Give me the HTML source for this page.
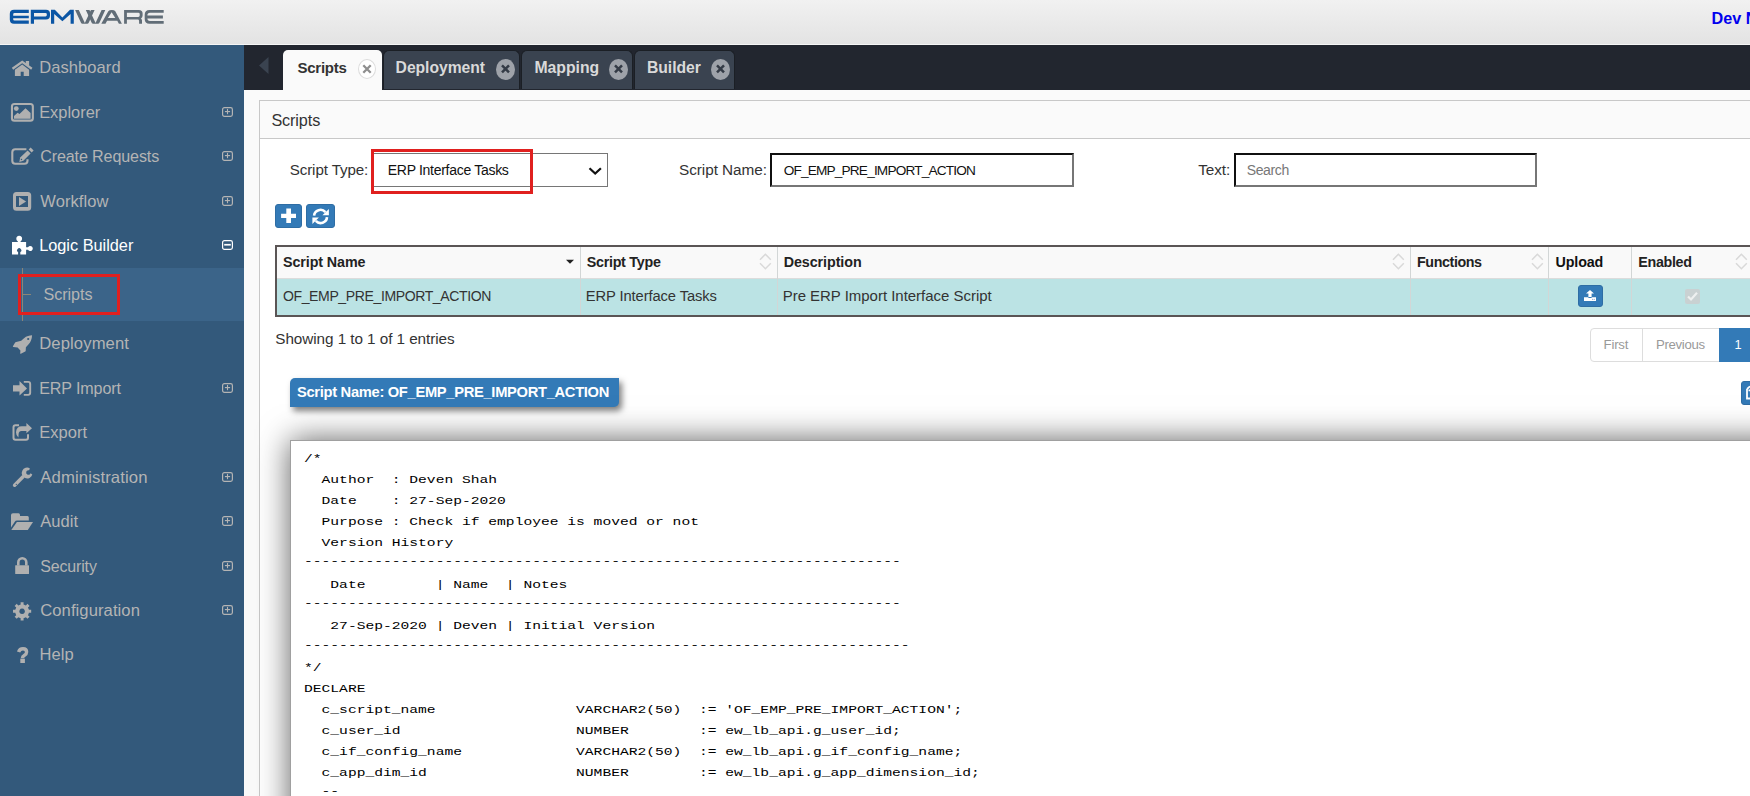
<!DOCTYPE html>
<html><head><meta charset="utf-8"><style>
*{box-sizing:border-box}
html,body{margin:0;padding:0}
body{width:1750px;height:796px;overflow:hidden;position:relative;background:#f5f5f5;font-family:"Liberation Sans",sans-serif;color:#333}
.abs{position:absolute}
.t{position:absolute;white-space:pre;line-height:1}
svg{position:absolute;overflow:visible}
</style></head><body>
<div class="abs" style="left:0;top:0;width:1750px;height:44px;background:linear-gradient(#f1f1f1,#e3e3e3)"></div>
<div class="abs" style="left:0;top:44px;width:1750px;height:1px;background:#f6f6f6"></div>
<svg style="left:0;top:0" width="180" height="44" viewBox="0 0 180 44">
<g fill="#0b56a5" fill-rule="evenodd">
<path d="M28.8,9.8 H14 Q9.8,9.8 9.8,14 V19.6 Q9.8,23.8 14,23.8 H28.8 V20.5 H14.5 Q13.2,20.5 13.2,19.2 V18.3 H28.8 V15.7 H13.2 V14.4 Q13.2,13 14.5,13 H28.8 Z"/>
<path d="M30.8,23.8 V9.8 H46 Q50,9.8 50,13.8 V15.6 Q50,19.6 46,19.6 H34 V23.8 Z M34,13 V16.4 H45.5 Q46.8,16.4 46.8,15.1 V14.3 Q46.8,13 45.5,13 Z"/>
<path d="M51,23.8 V9.8 H54.8 L62.4,17.4 L70,9.8 H73.8 V23.8 H70.6 V14 L62.4,21.2 L54.2,14 V23.8 Z"/>
</g>
<g fill="#616d77" fill-rule="evenodd">
<path d="M75.1,10.1 H78.8 L84.85,22.9 L90.9,10.1 H94.6 L88.6,23 Q88.2,23.7 87.3,23.7 H82.4 Q81.5,23.7 81.1,23 Z"/>
<path transform="translate(10.7,0)" d="M75.1,10.1 H78.8 L84.85,22.9 L90.9,10.1 H94.6 L88.6,23 Q88.2,23.7 87.3,23.7 H82.4 Q81.5,23.7 81.1,23 Z"/>
<path d="M101.3,23.7 L108.3,11.2 Q109.2,10 111.8,10 Q114.4,10 115.3,11.2 L121.9,23.7 H118.9 L117.3,20.7 H107.1 L105.5,23.7 Z M111.6,12.3 L115.3,18.1 H107.9 Z"/>
<path d="M124.1,23.7 V10 H138.8 Q142.6,10 142.6,13.6 V15.5 Q142.6,17.6 141,18.6 Q142,19.4 142,20.6 V23.7 H139.1 V21 Q139.1,19.6 137.7,19.6 H126.9 V23.7 Z M126.9,12.7 V16.9 H138.3 Q139.7,16.9 139.7,15.5 V14.1 Q139.7,12.7 138.3,12.7 Z"/>
<path d="M163.7,10 H149.5 Q144.7,10 144.7,14.8 V18.9 Q144.7,23.7 149.5,23.7 H163.7 V21 H150 Q147.4,21 147.4,18.6 V18.4 H162.9 V15.6 H147.4 V15.2 Q147.4,12.7 150,12.7 H163.7 Z"/>
</g></svg>
<div class="t" style="left:1711.60px;top:10.009px;font-size:16.2px;color:#0000ee;font-weight:bold;">Dev N</div>
<div class="abs" style="left:0;top:45px;width:244px;height:751px;background:#33597b"></div>
<div class="abs" style="left:0;top:268px;width:244px;height:53px;background:#3b6489"></div>
<div class="abs" style="left:22px;top:268px;width:1px;height:53px;background:#8b8576"></div>
<div class="abs" style="left:22px;top:294px;width:9px;height:1px;background:#8b8576"></div>
<div class="t" style="left:39.29px;top:60.011px;font-size:16.54px;color:#b4b4b4;font-weight:normal;letter-spacing:0.057px;">Dashboard</div>
<svg style="left:8px;top:56.0px" width="30" height="24" viewBox="0 0 30 24"><path d="M4.5,12.7 L14.2,5.9 L23.8,12.7" fill="none" stroke="#b0b0b0" stroke-width="2.3"/><rect x="17.8" y="5" width="3.3" height="4.5" fill="#b0b0b0"/><path d="M6.9,13.8 L14.2,8.4 L21.1,13.8 V20 H15.7 V15.7 H12.7 V20 H6.9 Z" fill="#b0b0b0"/></svg>
<div class="t" style="left:39.20px;top:104.003px;font-size:16.4px;color:#b4b4b4;font-weight:normal;">Explorer</div>
<svg style="left:8px;top:100.0px" width="30" height="24" viewBox="0 0 30 24"><rect x="3.95" y="4.05" width="20.9" height="16.6" rx="2.5" fill="none" stroke="#b0b0b0" stroke-width="2.1"/><circle cx="8.3" cy="8.6" r="2.4" fill="#b0b0b0"/><path d="M6,16 L9.6,12.7 L11.5,13.9 L17.5,8.3 L22.6,13 V18.7 H6 Z" fill="#b0b0b0"/></svg>
<svg style="left:222px;top:107px" width="11" height="10" viewBox="0 0 11 10"><rect x="0.6" y="0.6" width="9.8" height="8.8" rx="1.8" fill="none" stroke="#b4b4b4" stroke-width="1.2"/><rect x="2.9" y="4" width="5.2" height="1.15" fill="#b4b4b4"/><rect x="4.95" y="1.9" width="1.1" height="5.3" fill="#b4b4b4"/></svg>
<div class="t" style="left:40.20px;top:148.007px;font-size:16.08px;color:#b4b4b4;font-weight:normal;letter-spacing:-0.114px;">Create Requests</div>
<svg style="left:8px;top:144.0px" width="30" height="24" viewBox="0 0 30 24"><path d="M18.4,5.2 H7.3 Q4.3,5.2 4.3,8.2 V16.8 Q4.3,19.8 7.3,19.8 H16.5 Q19.5,19.8 19.5,16.8 V15.2" fill="none" stroke="#b0b0b0" stroke-width="2.1"/><path d="M11.3,17.9 L12.2,13.6 L19.6,6.5 L22.6,9.6 L15.4,16.8 Z" fill="#b0b0b0"/><path d="M20.6,5.5 L22.6,3.6 L25.6,6.6 L23.6,8.6 Z" fill="#b0b0b0"/><rect x="12.8" y="14.8" width="1.3" height="1.3" fill="#33597b"/></svg>
<svg style="left:222px;top:151px" width="11" height="10" viewBox="0 0 11 10"><rect x="0.6" y="0.6" width="9.8" height="8.8" rx="1.8" fill="none" stroke="#b4b4b4" stroke-width="1.2"/><rect x="2.9" y="4" width="5.2" height="1.15" fill="#b4b4b4"/><rect x="4.95" y="1.9" width="1.1" height="5.3" fill="#b4b4b4"/></svg>
<div class="t" style="left:40.30px;top:194.011px;font-size:16.54px;color:#b4b4b4;font-weight:normal;letter-spacing:0.053px;">Workflow</div>
<svg style="left:8px;top:189.0px" width="30" height="24" viewBox="0 0 30 24"><path fill-rule="evenodd" d="M8.5,3 H19.7 Q23.2,3 23.2,6.5 V18.2 Q23.2,21.7 19.7,21.7 H8.5 Q5,21.7 5,18.2 V6.5 Q5,3 8.5,3 Z M8,6.9 V17.9 H20 V6.9 Z" fill="#b0b0b0"/><path d="M11,8 V16.9 L18.1,12.4 Z" fill="#b0b0b0"/></svg>
<svg style="left:222px;top:196px" width="11" height="10" viewBox="0 0 11 10"><rect x="0.6" y="0.6" width="9.8" height="8.8" rx="1.8" fill="none" stroke="#b4b4b4" stroke-width="1.2"/><rect x="2.9" y="4" width="5.2" height="1.15" fill="#b4b4b4"/><rect x="4.95" y="1.9" width="1.1" height="5.3" fill="#b4b4b4"/></svg>
<div class="t" style="left:39.20px;top:237.214px;font-size:16.34px;color:#ffffff;font-weight:normal;letter-spacing:-0.021px;">Logic Builder</div>
<svg style="left:8px;top:233.0px" width="30" height="24" viewBox="0 0 30 24"><path fill-rule="evenodd" d="M4,8.9 H9.8 V8.2 A2.9,2.9 0 1 1 12.6,8.2 V8.9 H18.1 V14.3 H20 A2.55,2.55 0 1 1 20,16.7 H18.1 V21.4 H12.3 V19.1 A2.1,2.1 0 1 0 10.1,19.1 V21.4 H4 Z" fill="#fff"/></svg>
<svg style="left:222px;top:240px" width="11" height="10" viewBox="0 0 11 10"><rect x="0.6" y="0.6" width="9.8" height="8.8" rx="1.8" fill="none" stroke="#ffffff" stroke-width="1.2"/><rect x="2.2" y="3.9" width="6.6" height="1.7" fill="#ffffff"/></svg>
<div class="t" style="left:39.18px;top:336.211px;font-size:16.66px;color:#b4b4b4;font-weight:normal;letter-spacing:0.102px;">Deployment</div>
<svg style="left:8px;top:331.0px" width="30" height="24" viewBox="0 0 30 24"><path fill-rule="evenodd" d="M24.1,4.2 C21.5,4.2 18.5,5 16,7.2 L13.2,9.8 L8.2,10.9 Q7.4,11.1 7,11.7 L4.9,15.2 Q4.7,15.9 5.4,16 L9.6,16.5 L12.4,19.4 L12.2,22.3 Q12.2,23 12.9,22.8 L17.2,20.6 Q17.7,20.3 17.7,19.8 L17.9,16.2 L20.4,13.6 C22.6,11.3 23.9,8 24.1,4.2 Z M19.1,8 a1.1,1.1 0 1 0 2.2,0 a1.1,1.1 0 1 0 -2.2,0 Z" fill="#b0b0b0"/></svg>
<div class="t" style="left:39.22px;top:380.002px;font-size:16.09px;color:#b4b4b4;font-weight:normal;letter-spacing:-0.118px;">ERP Import</div>
<svg style="left:8px;top:376.0px" width="30" height="24" viewBox="0 0 30 24"><path d="M5,9.3 H11.5 V5 L19,12.4 L11.5,19.6 V15.6 H5 Z" fill="#b0b0b0"/><path d="M15.8,5.9 H20.2 Q22.2,5.9 22.2,7.9 V16.85 Q22.2,18.85 20.2,18.85 H15.8" fill="none" stroke="#b0b0b0" stroke-width="1.9"/></svg>
<svg style="left:222px;top:383px" width="11" height="10" viewBox="0 0 11 10"><rect x="0.6" y="0.6" width="9.8" height="8.8" rx="1.8" fill="none" stroke="#b4b4b4" stroke-width="1.2"/><rect x="2.9" y="4" width="5.2" height="1.15" fill="#b4b4b4"/><rect x="4.95" y="1.9" width="1.1" height="5.3" fill="#b4b4b4"/></svg>
<div class="t" style="left:39.19px;top:424.000px;font-size:16.5px;color:#b4b4b4;font-weight:normal;letter-spacing:0.039px;">Export</div>
<svg style="left:8px;top:420.0px" width="30" height="24" viewBox="0 0 30 24"><path d="M11,5.2 H7.5 Q5.5,5.2 5.5,7.2 V17.8 Q5.5,19.8 7.5,19.8 H18 Q20,19.8 20,17.8 V14.2" fill="none" stroke="#b0b0b0" stroke-width="2"/><path d="M18.4,3 L24,8.2 L18.4,13.3 V10.9 H13.5 Q10.8,11 10.6,14 L10.4,17.6 Q7.8,14.5 8,12.2 Q8.4,6.3 14,6.3 H18.4 Z" fill="#b0b0b0"/></svg>
<div class="t" style="left:40.30px;top:469.803px;font-size:16.72px;color:#b4b4b4;font-weight:normal;letter-spacing:0.103px;">Administration</div>
<svg style="left:8px;top:465.0px" width="30" height="24" viewBox="0 0 30 24"><line x1="6.6" y1="20.2" x2="15" y2="11.8" stroke="#b0b0b0" stroke-width="3.5" stroke-linecap="round"/><circle cx="8.3" cy="19.4" r="0.6" fill="#33597b"/><path d="M21.9,3.4 A5.4,5.4 0 1 0 24.3,9.6 L22.6,8.3 A2.3,2.3 0 1 1 21.1,5.3 Z" fill="#b0b0b0"/></svg>
<svg style="left:222px;top:472px" width="11" height="10" viewBox="0 0 11 10"><rect x="0.6" y="0.6" width="9.8" height="8.8" rx="1.8" fill="none" stroke="#b4b4b4" stroke-width="1.2"/><rect x="2.9" y="4" width="5.2" height="1.15" fill="#b4b4b4"/><rect x="4.95" y="1.9" width="1.1" height="5.3" fill="#b4b4b4"/></svg>
<div class="t" style="left:40.20px;top:514.001px;font-size:16.53px;color:#b4b4b4;font-weight:normal;letter-spacing:0.049px;">Audit</div>
<svg style="left:8px;top:509.0px" width="30" height="24" viewBox="0 0 30 24"><path d="M3,20 V6 Q3,4.2 5,4.2 H10.5 Q12,4.2 12,6 V7 H19.5 Q20.8,7 20.8,8.5 V11.6 H9 Q7.6,11.6 6.8,12.8 L3,18.6 Z" fill="#b0b0b0"/><path d="M8.9,13 H25 L19.8,21 H3.3 Z" fill="#b0b0b0"/></svg>
<svg style="left:222px;top:516px" width="11" height="10" viewBox="0 0 11 10"><rect x="0.6" y="0.6" width="9.8" height="8.8" rx="1.8" fill="none" stroke="#b4b4b4" stroke-width="1.2"/><rect x="2.9" y="4" width="5.2" height="1.15" fill="#b4b4b4"/><rect x="4.95" y="1.9" width="1.1" height="5.3" fill="#b4b4b4"/></svg>
<div class="t" style="left:40.20px;top:558.707px;font-size:15.98px;color:#b4b4b4;font-weight:normal;letter-spacing:-0.139px;">Security</div>
<svg style="left:8px;top:554.0px" width="30" height="24" viewBox="0 0 30 24"><rect x="7.2" y="11.2" width="13.8" height="8.8" rx="0.5" fill="#b0b0b0"/><path d="M10.3,11.5 V8.2 A4,4 0 0 1 18.3,8.2 V11.5" fill="none" stroke="#b0b0b0" stroke-width="2.6"/></svg>
<svg style="left:222px;top:561px" width="11" height="10" viewBox="0 0 11 10"><rect x="0.6" y="0.6" width="9.8" height="8.8" rx="1.8" fill="none" stroke="#b4b4b4" stroke-width="1.2"/><rect x="2.9" y="4" width="5.2" height="1.15" fill="#b4b4b4"/><rect x="4.95" y="1.9" width="1.1" height="5.3" fill="#b4b4b4"/></svg>
<div class="t" style="left:40.20px;top:602.806px;font-size:16.62px;color:#b4b4b4;font-weight:normal;letter-spacing:0.076px;">Configuration</div>
<svg style="left:8px;top:598.0px" width="30" height="24" viewBox="0 0 30 24"><path fill-rule="evenodd" d="M12.67,6.45 L12.59,4.22 L15.61,4.22 L15.53,6.45 L17.93,7.44 L19.45,5.81 L21.59,7.95 L19.96,9.47 L20.95,11.87 L23.18,11.79 L23.18,14.81 L20.95,14.73 L19.96,17.13 L21.59,18.65 L19.45,20.79 L17.93,19.16 L15.53,20.15 L15.61,22.38 L12.59,22.38 L12.67,20.15 L10.27,19.16 L8.75,20.79 L6.61,18.65 L8.24,17.13 L7.25,14.73 L5.02,14.81 L5.02,11.79 L7.25,11.87 L8.24,9.47 L6.61,7.95 L8.75,5.81 L10.27,7.44 Z M14.1,10.5 a2.8,2.8 0 1 0 0.01,0 Z" fill="#b0b0b0"/></svg>
<svg style="left:222px;top:605px" width="11" height="10" viewBox="0 0 11 10"><rect x="0.6" y="0.6" width="9.8" height="8.8" rx="1.8" fill="none" stroke="#b4b4b4" stroke-width="1.2"/><rect x="2.9" y="4" width="5.2" height="1.15" fill="#b4b4b4"/><rect x="4.95" y="1.9" width="1.1" height="5.3" fill="#b4b4b4"/></svg>
<div class="t" style="left:39.39px;top:647.309px;font-size:16.55px;color:#b4b4b4;font-weight:normal;letter-spacing:0.069px;">Help</div>
<svg style="left:8px;top:643.0px" width="30" height="24" viewBox="0 0 30 24"><path d="M10.6,9 Q11.6,5.8 15,5.8 Q18.6,5.8 18.6,9 Q18.6,11 16.5,12.2 Q14.4,13.4 14.4,15.2" fill="none" stroke="#b0b0b0" stroke-width="3.4"/><rect x="12.3" y="15.7" width="4.6" height="4.3" fill="#b0b0b0"/></svg>
<div class="t" style="left:43.60px;top:286.014px;font-size:16.16px;color:#b4b4b4;font-weight:normal;letter-spacing:-0.078px;">Scripts</div>
<div class="abs" style="left:17.5px;top:273.5px;width:102.5px;height:41.5px;border:3px solid #e0201f"></div>
<div class="abs" style="left:244px;top:45px;width:1506px;height:45px;background:#22262f"></div>
<svg style="left:244px;top:45px" width="40" height="45" viewBox="0 0 40 45"><path d="M15,20.5 L24.5,12 V29 Z" fill="#3a4350"/></svg>
<div class="abs" style="left:283px;top:50px;width:99px;height:40px;background:#fafafa;border-radius:5px 5px 0 0"></div>
<div class="t" style="left:297.50px;top:60.011px;font-size:15.04px;color:#333333;font-weight:bold;letter-spacing:-0.280px;">Scripts</div>
<div class="abs" style="left:357.5px;top:59px;width:18px;height:20px;border-radius:50%;background:#fff;border:1px solid #dcdcdc"></div>
<svg style="left:357.5px;top:59px" width="18" height="20" viewBox="0 0 18 20"><path d="M5.3,6.3 L12.7,13.7 M12.7,6.3 L5.3,13.7" stroke="#8e8e8e" stroke-width="2.3"/></svg>
<div class="abs" style="left:383px;top:50px;width:137px;height:39px;background:#3a4350;border:1px solid #1b1f25;border-bottom:none;border-radius:6px 6px 0 0"></div>
<div class="t" style="left:395.61px;top:60.009px;font-size:15.7px;color:#d9d9d9;font-weight:bold;letter-spacing:-0.042px;">Deployment</div>
<div class="abs" style="left:496.0px;top:59px;width:19px;height:21px;border-radius:50%;background:#9ea2a9"></div>
<svg style="left:496.0px;top:59px" width="19" height="21" viewBox="0 0 19 21"><path d="M6,6.4 L13,13.4 M13,6.4 L6,13.4" stroke="#343b46" stroke-width="2.5"/></svg>
<div class="abs" style="left:521px;top:50px;width:112px;height:39px;background:#3a4350;border:1px solid #1b1f25;border-bottom:none;border-radius:6px 6px 0 0"></div>
<div class="t" style="left:534.40px;top:60.006px;font-size:15.77px;color:#d9d9d9;font-weight:bold;letter-spacing:-0.010px;">Mapping</div>
<div class="abs" style="left:608.5px;top:59px;width:19px;height:21px;border-radius:50%;background:#9ea2a9"></div>
<svg style="left:608.5px;top:59px" width="19" height="21" viewBox="0 0 19 21"><path d="M6,6.4 L13,13.4 M13,6.4 L6,13.4" stroke="#343b46" stroke-width="2.5"/></svg>
<div class="abs" style="left:634px;top:50px;width:101px;height:39px;background:#3a4350;border:1px solid #1b1f25;border-bottom:none;border-radius:6px 6px 0 0"></div>
<div class="t" style="left:646.91px;top:60.015px;font-size:15.72px;color:#d9d9d9;font-weight:bold;letter-spacing:-0.033px;">Builder</div>
<div class="abs" style="left:710.5px;top:59px;width:19px;height:21px;border-radius:50%;background:#9ea2a9"></div>
<svg style="left:710.5px;top:59px" width="19" height="21" viewBox="0 0 19 21"><path d="M6,6.4 L13,13.4 M13,6.4 L6,13.4" stroke="#343b46" stroke-width="2.5"/></svg>
<div class="abs" style="left:244px;top:90px;width:1506px;height:706px;background:#fafafa"></div>
<div class="abs" style="left:259px;top:100px;width:1600px;height:800px;background:#fff;border:1px solid #c8c8c8"></div>
<div class="abs" style="left:260px;top:101px;width:1600px;height:38px;background:#fafafa;border-bottom:1px solid #c8c8c8"></div>
<div class="t" style="left:271.40px;top:112.014px;font-size:16.19px;color:#333;font-weight:normal;letter-spacing:-0.106px;">Scripts</div>
<div class="t" style="left:289.70px;top:162.009px;font-size:15.17px;color:#333;font-weight:normal;letter-spacing:-0.101px;">Script Type:</div>
<div class="abs" style="left:373px;top:153px;width:235px;height:34px;background:#fff;border:1px solid #767676"></div>
<div class="t" style="left:387.76px;top:163.011px;font-size:14.04px;color:#111;font-weight:normal;letter-spacing:-0.305px;">ERP Interface Tasks</div>
<svg style="left:585px;top:162.6px" width="20" height="16" viewBox="0 0 20 16"><path d="M4.5,5.2 L10.2,10.6 L15.9,5.2" fill="none" stroke="#111" stroke-width="2.2"/></svg>
<div class="abs" style="left:370.8px;top:148.6px;width:162.5px;height:45.2px;border:3px solid #e0201f"></div>
<div class="t" style="left:679.00px;top:162.007px;font-size:15.33px;color:#333;font-weight:normal;letter-spacing:-0.055px;">Script Name:</div>
<div class="abs" style="left:770px;top:153px;width:304px;height:34px;background:#fff;border:2px solid;border-color:#101010 #767676 #767676 #101010"></div>
<div class="t" style="left:783.70px;top:164.003px;font-size:13.65px;color:#111;font-weight:normal;letter-spacing:-0.827px;">OF_EMP_PRE_IMPORT_ACTION</div>
<div class="t" style="left:1198.20px;top:162.214px;font-size:15.31px;color:#333;font-weight:normal;letter-spacing:-0.060px;">Text:</div>
<div class="abs" style="left:1234px;top:153px;width:303px;height:34px;background:#fff;border:2px solid;border-color:#101010 #767676 #767676 #101010"></div>
<div class="t" style="left:1246.70px;top:163.203px;font-size:14.05px;color:#777;font-weight:normal;letter-spacing:-0.379px;">Search</div>
<div class="abs" style="left:275px;top:204px;width:27px;height:24px;background:#337ab7;border:1px solid #2e6da4;border-radius:3px"></div>
<svg style="left:275px;top:204px" width="27" height="24" viewBox="0 0 27 24"><path d="M6.1,9.8 H21 V13.9 H6.1 Z M11.3,4.4 H16 V18.9 H11.3 Z" fill="#fff"/></svg>
<div class="abs" style="left:306px;top:204px;width:29px;height:24px;background:#337ab7;border:1px solid #2e6da4;border-radius:3px"></div>
<svg style="left:306px;top:204px" width="29" height="24" viewBox="0 0 29 24"><path d="M8.1,11.6 A6.4,6.2 0 0 1 19.4,8.1" fill="none" stroke="#fff" stroke-width="2.6"/><path d="M22.9,5 V11.2 H16.4 Z" fill="#fff"/><path d="M21,13.2 A6.4,6.2 0 0 1 9.8,16.9" fill="none" stroke="#fff" stroke-width="2.6"/><path d="M6.4,19.9 V13.6 H12.9 Z" fill="#fff"/></svg>
<div class="abs" style="left:275px;top:245px;width:1500px;height:72px;background:#bbe3e4;border:2px solid #5a5555;border-right:none"></div>
<div class="abs" style="left:277px;top:247px;width:1500px;height:32px;background:#f9f9f9;border-bottom:1px solid #dcdcdc"></div>
<div class="abs" style="left:580px;top:247px;width:1px;height:68px;background:#d2d6d6"></div>
<div class="abs" style="left:777px;top:247px;width:1px;height:68px;background:#d2d6d6"></div>
<div class="abs" style="left:1410px;top:247px;width:1px;height:68px;background:#d2d6d6"></div>
<div class="abs" style="left:1548px;top:247px;width:1px;height:68px;background:#d2d6d6"></div>
<div class="abs" style="left:1631px;top:247px;width:1px;height:68px;background:#d2d6d6"></div>
<div class="t" style="left:283.00px;top:255.006px;font-size:14.3px;color:#222;font-weight:bold;letter-spacing:-0.098px;">Script Name</div>
<div class="t" style="left:586.70px;top:255.006px;font-size:14.3px;color:#222;font-weight:bold;letter-spacing:-0.265px;">Script Type</div>
<div class="t" style="left:783.70px;top:255.006px;font-size:14.3px;color:#222;font-weight:bold;letter-spacing:-0.071px;">Description</div>
<div class="t" style="left:1417.00px;top:255.006px;font-size:14.3px;color:#222;font-weight:bold;letter-spacing:-0.406px;">Functions</div>
<div class="t" style="left:1555.50px;top:255.006px;font-size:14.3px;color:#111;font-weight:bold;letter-spacing:-0.123px;">Upload</div>
<div class="t" style="left:1638.30px;top:255.006px;font-size:14.3px;color:#222;font-weight:bold;letter-spacing:-0.329px;">Enabled</div>
<div class="t" style="left:283.00px;top:289.006px;font-size:14.05px;color:#333;font-weight:normal;letter-spacing:-0.399px;">OF_EMP_PRE_IMPORT_ACTION</div>
<div class="t" style="left:585.72px;top:289.015px;font-size:14.72px;color:#333;font-weight:normal;letter-spacing:-0.088px;">ERP Interface Tasks</div>
<div class="t" style="left:782.70px;top:289.015px;font-size:14.97px;color:#333;font-weight:normal;letter-spacing:-0.013px;">Pre ERP Import Interface Script</div>
<svg style="left:560px;top:255px" width="20" height="14" viewBox="0 0 20 14"><path d="M6,4.7 H14 L10,8.7 Z" fill="#222"/></svg>
<svg style="left:759px;top:252px" width="13" height="19" viewBox="0 0 13 19"><path d="M1.0,7.7 L6.4,2.2 L11.8,7.7 M1.0,11.3 L6.4,16.7 L11.8,11.3" fill="none" stroke="#d9d9d9" stroke-width="1.5"/></svg>
<svg style="left:1392px;top:252px" width="13" height="19" viewBox="0 0 13 19"><path d="M1.0,7.7 L6.4,2.2 L11.8,7.7 M1.0,11.3 L6.4,16.7 L11.8,11.3" fill="none" stroke="#d9d9d9" stroke-width="1.5"/></svg>
<svg style="left:1530.6px;top:252px" width="13" height="19" viewBox="0 0 13 19"><path d="M1.0,7.7 L6.4,2.2 L11.8,7.7 M1.0,11.3 L6.4,16.7 L11.8,11.3" fill="none" stroke="#d9d9d9" stroke-width="1.5"/></svg>
<svg style="left:1734.6px;top:252px" width="13" height="19" viewBox="0 0 13 19"><path d="M1.0,7.7 L6.4,2.2 L11.8,7.7 M1.0,11.3 L6.4,16.7 L11.8,11.3" fill="none" stroke="#d9d9d9" stroke-width="1.5"/></svg>
<div class="abs" style="left:1578px;top:285px;width:25px;height:22px;background:#337ab7;border:1px solid #2e6da4;border-radius:3px"></div>
<svg style="left:1578px;top:285px" width="25" height="22" viewBox="0 0 25 22"><path d="M8,8.6 L12,5 L16,8.6 H13.6 V12 H10.4 V8.6 Z" fill="#fff"/><path d="M6,12.2 H10.4 V13 H13.6 V12.2 H18 V16 H6 Z" fill="#fff"/><circle cx="14.6" cy="14.3" r="0.55" fill="#6f8fc8"/><circle cx="16.2" cy="14.3" r="0.55" fill="#6f8fc8"/></svg>
<div class="abs" style="left:1685px;top:289px;width:14.5px;height:14.5px;background:#c9d1d2;border-radius:2px"></div>
<svg style="left:1685px;top:289px" width="15" height="15" viewBox="0 0 15 15"><path d="M3,7.5 L6,10.5 L12,3.8" fill="none" stroke="#eef0f0" stroke-width="2.2"/></svg>
<div class="t" style="left:275.30px;top:331.011px;font-size:15.29px;color:#333;font-weight:normal;letter-spacing:-0.061px;">Showing 1 to 1 of 1 entries</div>
<div class="abs" style="left:1590px;top:328px;width:200px;height:34px;background:#fff;border:1px solid #dddddd;border-radius:4px"></div>
<div class="abs" style="left:1642px;top:329px;width:1px;height:32px;background:#dddddd"></div>
<div class="abs" style="left:1719px;top:328px;width:40px;height:34px;background:#337ab7"></div>
<div class="t" style="left:1603.60px;top:338.009px;font-size:13.2px;color:#999;font-weight:normal;letter-spacing:-0.218px;">First</div>
<div class="t" style="left:1656.00px;top:338.009px;font-size:13.2px;color:#999;font-weight:normal;letter-spacing:-0.316px;">Previous</div>
<div class="t" style="left:1734.60px;top:339.006px;font-size:12.8px;color:#fff;font-weight:normal;">1</div>
<div class="abs" style="left:1741px;top:381px;width:30px;height:24px;background:#337ab7;border:1px solid #2e6da4;border-radius:3px"></div>
<svg style="left:1741px;top:381px" width="9" height="24" viewBox="0 0 9 24"><path d="M6,8 V17.5 H10 M6,8 L9,5.3 M7.5,9.3 H10" fill="none" stroke="#fff" stroke-width="1.8"/></svg>
<div class="abs" style="left:290px;top:378px;width:329px;height:29px;background:#337ab7;border-radius:5px 0 5px 0;box-shadow:3px 4px 6px rgba(0,0,0,0.5)"></div>
<div class="t" style="left:297.00px;top:385.004px;font-size:14.71px;color:#fff;font-weight:bold;letter-spacing:-0.311px;">Script Name: OF_EMP_PRE_IMPORT_ACTION</div>
<div class="abs" style="left:290px;top:440px;width:1600px;height:600px;background:#fff;border:1px solid #a0a0a0;box-shadow:0 0 30px rgba(0,0,0,0.62)"></div>
<pre class="abs" style="margin:0;left:304px;top:448.5px;font-family:'Liberation Mono',monospace;font-size:14.63px;line-height:26.795px;color:#000;transform:scaleY(0.78);transform-origin:0 0">/*
  Author  : Deven Shah
  Date    : 27-Sep-2020
  Purpose : Check if employee is moved or not
  Version History
<span style="position:relative;top:-3.4px">--------------------------------------------------------------------</span>
   Date        | Name  | Notes
<span style="position:relative;top:-3.4px">--------------------------------------------------------------------</span>
   27-Sep-2020 | Deven | Initial Version
<span style="position:relative;top:-3.4px">---------------------------------------------------------------------</span>
*/
DECLARE
  c_script_name                VARCHAR2(50)  := &#x27;OF_EMP_PRE_IMPORT_ACTION&#x27;;
  c_user_id                    NUMBER        := ew_lb_api.g_user_id;
  c_if_config_name             VARCHAR2(50)  := ew_lb_api.g_if_config_name;
  c_app_dim_id                 NUMBER        := ew_lb_api.g_app_dimension_id;
<span style="position:relative;top:-3.4px">  --</span></pre>
</body></html>
